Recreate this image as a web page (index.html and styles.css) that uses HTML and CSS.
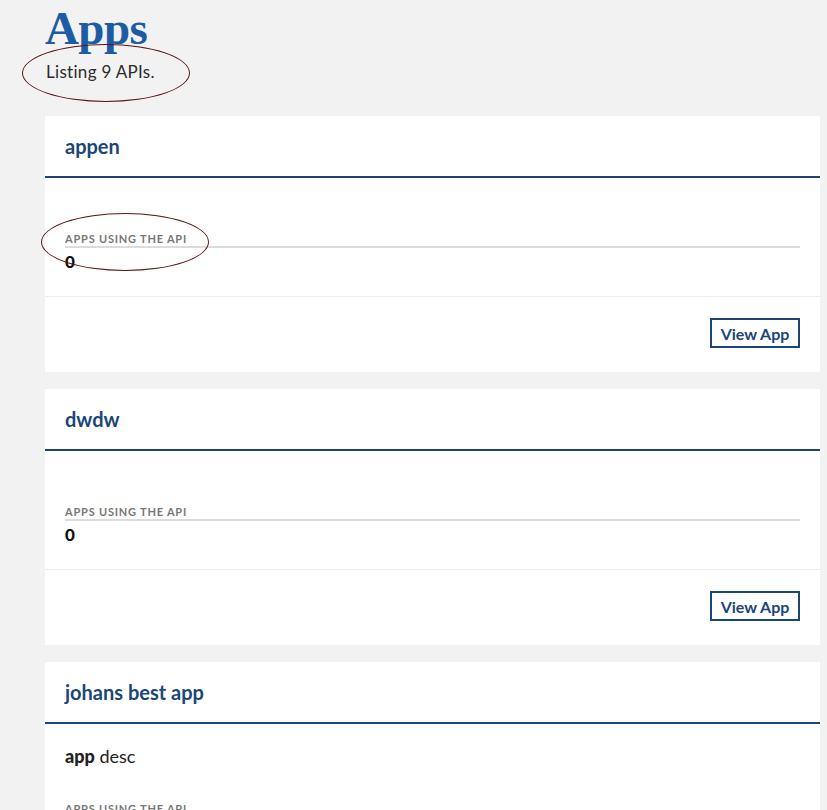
FILE: index.html
```html
<!DOCTYPE html>
<html lang="en">
<head>
<meta charset="utf-8">
<title>Apps</title>
<link rel="stylesheet" href="styles.css">
</head>
<body>
<div class="page">
  <header class="page-head">
    <h1 class="page-title">Apps</h1>
    <p class="page-sub">Listing 9 APIs.</p>
    <span class="mark mark-sub"></span>
  </header>
  <div class="list">
    <section class="card">
      <div class="card-head"><h2 class="card-title">appen</h2></div>
      <div class="card-body">
        <p class="desc desc-empty"></p>
        <div class="stat">
          <div class="stat-label">Apps using the API</div>
          <div class="stat-value">0</div>
          <span class="mark mark-stat"></span>
        </div>
      </div>
      <div class="card-foot"><a class="btn" href="#">View App</a></div>
    </section>
    <section class="card">
      <div class="card-head"><h2 class="card-title">dwdw</h2></div>
      <div class="card-body">
        <p class="desc desc-empty"></p>
        <div class="stat">
          <div class="stat-label">Apps using the API</div>
          <div class="stat-value">0</div>
        </div>
      </div>
      <div class="card-foot"><a class="btn" href="#">View App</a></div>
    </section>
    <section class="card">
      <div class="card-head"><h2 class="card-title">johans best app</h2></div>
      <div class="card-body">
        <p class="desc"><strong>app</strong> desc</p>
        <div class="stat">
          <div class="stat-label">Apps using the API</div>
          <div class="stat-value">0</div>
        </div>
      </div>
      <div class="card-foot"><a class="btn" href="#">View App</a></div>
    </section>
  </div>
</div>
</body>
</html>
```

FILE: styles.css
```css
* { box-sizing: border-box; }
html, body { margin: 0; padding: 0; background: #f2f2f2; }
body { font-family: "Lato", "Liberation Sans", sans-serif; color: #222; }
.page { padding: 0 7px 40px 45px; }
.page-head { position: relative; padding-top: 5px; margin-bottom: 33px; }
.page-title {
  margin: 0;
  font-family: "Liberation Serif", "DejaVu Serif", serif;
  font-weight: 700;
  font-size: 47px;
  line-height: 46px;
  letter-spacing: -0.6px;
  color: #1d5ca4;
}
.page-sub { margin: 10px 0 0 1px; font-size: 17px; line-height: 22px; letter-spacing: 0.3px; color: #2b2b2b; }
.mark { position: absolute; border: 1px solid #5c1515; border-radius: 50%; pointer-events: none; }
.mark-sub { left: -23px; top: 44px; width: 168px; height: 58px; }
.list { display: flex; flex-direction: column; gap: 17px; width: 775px; }
.card { background: #fff; }
.card-head { padding: 18px 20px 18px; border-bottom: 2px solid #1b4675; }
.card-title { margin: 0; font-size: 20px; line-height: 24px; font-weight: 700; color: #1b4675; }
.card-body { padding: 20px 20px 24px; border-bottom: 1px solid #ececec; }
.desc { margin: 0 0 34px; font-size: 18px; line-height: 24px; color: #222; }
.desc strong { font-weight: 900; }
.desc-empty { min-height: 0; }
.stat { position: relative; }
.stat-label {
  font-size: 11px; line-height: 14px; font-weight: 700;
  letter-spacing: 0.8px; text-transform: uppercase; color: #777;
  border-bottom: 2px solid #dcdcdc;
}
.stat-value { margin-top: 4px; font-size: 17px; line-height: 20px; font-weight: 900; color: #111; }
.mark-stat { left: -24px; top: -19px; width: 168px; height: 58px; }
.card-foot { display: flex; justify-content: flex-end; padding: 21px 20px 24px; }
.btn {
  display: inline-flex; align-items: center; justify-content: center;
  width: 90px; height: 30px;
  border: 2px solid #1b4675; color: #1b4675;
  font-size: 16px; font-weight: 700; text-decoration: none;
}
```
